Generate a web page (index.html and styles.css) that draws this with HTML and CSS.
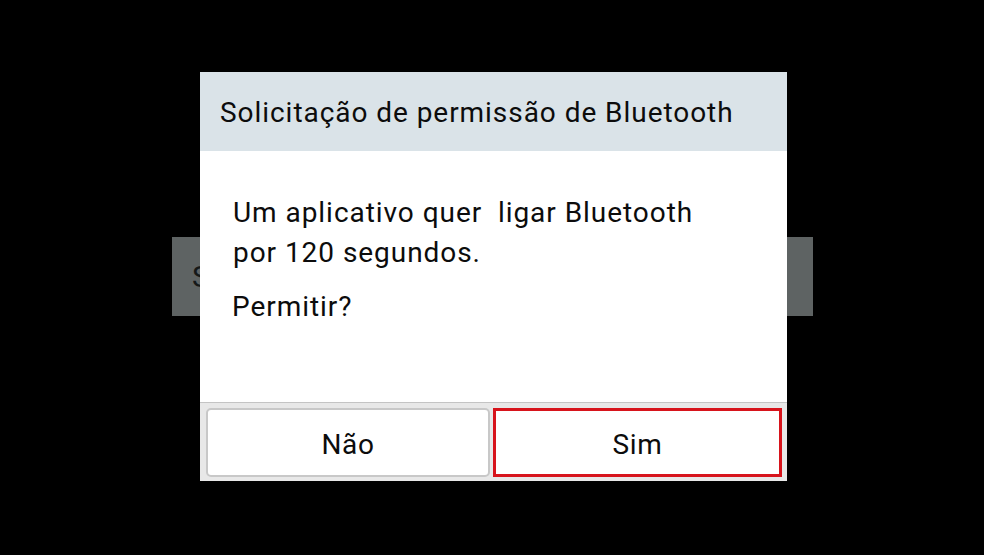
FILE: index.html
```html
<!DOCTYPE html>
<html lang="pt">
<head>
<meta charset="utf-8">
<link rel="stylesheet" href="styles.css">
</head>
<body>
<div class="screen">
  <div class="behind"><span class="behind-text">S</span></div>
  <div class="dialog">
    <div class="dialog-header">
      <h1 class="dialog-title">Solicitação de permissão de Bluetooth</h1>
    </div>
    <div class="dialog-body">
      <p class="msg">Um aplicativo quer&nbsp; ligar Bluetooth<br>por 120 segundos.</p>
      <p class="ask">Permitir?</p>
    </div>
    <div class="dialog-footer">
      <button class="btn btn-no">Não</button>
      <button class="btn btn-yes">Sim</button>
    </div>
  </div>
</div>
</body>
</html>
```
FILE: styles.css
```css
html, body {
  margin: 0;
  padding: 0;
  background: #000;
}
.screen {
  position: relative;
  width: 984px;
  height: 555px;
  overflow: hidden;
  font-family: Roboto, "Noto Sans", sans-serif;
  padding-top: 237px;
  box-sizing: border-box;
}
.behind {
  margin-left: 172px;
  width: 641px;
  height: 79px;
  background: #5e6363;
  box-sizing: border-box;
  padding-left: 20px;
  display: flex;
  align-items: center;
  overflow: hidden;
}
.behind-text {
  font-size: 30px;
  color: #151818;
}
.dialog {
  position: absolute;
  left: 200px;
  top: 72px;
  width: 587px;
  height: 409px;
  display: flex;
  flex-direction: column;
  background: #fff;
}
.dialog-header {
  height: 79px;
  background: #dae3e8;
  display: flex;
  align-items: center;
  padding-left: 20px;
  flex: none;
}
.dialog-title {
  margin: 0;
  font-size: 28px;
  font-weight: 400;
  letter-spacing: 0.95px;
  color: #0c0c0c;
  padding-top: 1px;
}
.dialog-body {
  flex: 1;
  padding: 42px 0 0 33px;
  color: #0c0c0c;
}
.msg {
  margin: 0;
  font-size: 28px;
  letter-spacing: 0.95px;
  line-height: 40px;
}
.ask {
  margin: 14px 0 0 -1px;
  font-size: 28px;
  letter-spacing: 0.95px;
  line-height: 40px;
}
.dialog-footer {
  flex: none;
  height: 79px;
  box-sizing: border-box;
  border-top: 1px solid #c4c4c4;
  background: #e8e8e8;
  padding: 5px 5px 4px 6px;
  display: flex;
  gap: 3px;
}
.btn {
  font-family: Roboto, "Noto Sans", sans-serif;
  font-size: 28px;
  letter-spacing: 0.6px;
  color: #0c0c0c;
  background: #fff;
  margin: 0;
  padding: 3px 0 0;
}
.btn-no {
  width: 284px;
  border: 2px solid #c8c8c8;
  border-radius: 5px;
}
.btn-yes {
  flex: 1;
  border: 3px solid #d7141c;
  border-radius: 0;
}
```
